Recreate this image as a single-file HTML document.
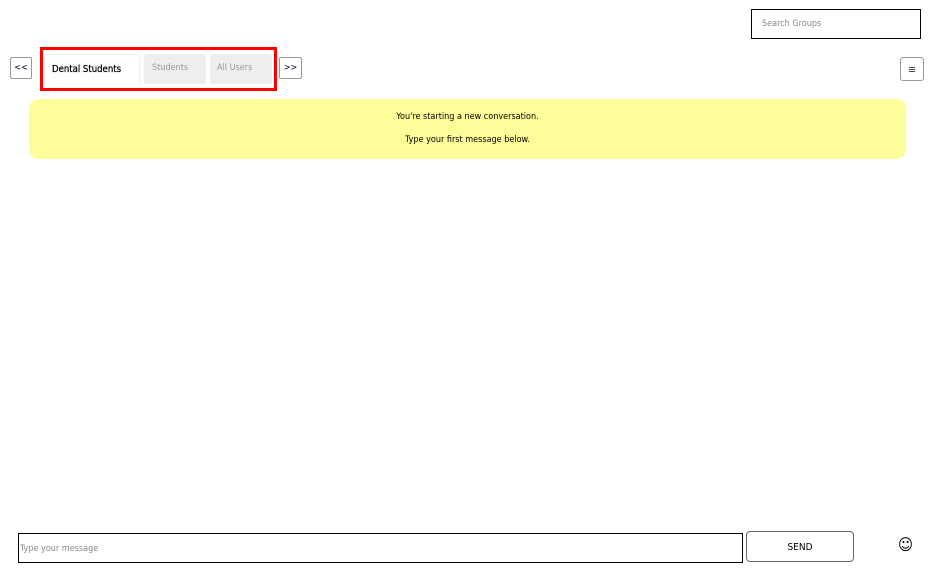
<!DOCTYPE html>
<html><head><style>
body{margin:0;width:936px;height:575px;background:#fff;font-family:"DejaVu Sans Condensed","Liberation Sans",sans-serif;position:relative;overflow:hidden}
.a{position:absolute;box-sizing:border-box}
</style></head><body>
<div class="a" style="left:751px;top:9px;width:170px;height:30px;border:1px solid #000;font-size:9px;color:#888;padding:9px 0 0 10px">Search Groups</div>
<div class="a" style="left:10px;top:57px;width:22px;height:22px;border:1px solid #999;border-radius:2px;font-size:9px;text-align:center;line-height:21px;color:#003">&lt;&lt;</div>
<div class="a" style="left:40px;top:47px;width:237px;height:44px;border:3px solid #f00"></div>
<div class="a" style="left:44px;top:54px;width:96px;height:31px;border:1px solid #eee;border-bottom:none;border-radius:3px 3px 0 0;font-size:9.5px;color:#000;padding:9px 0 0 7px;-webkit-text-stroke:0.25px #000">Dental Students</div>
<div class="a" style="left:144px;top:54px;width:62px;height:30px;background:#eceef0;border-radius:3px 3px 0 0;font-size:9px;color:#999;padding:9px 0 0 8px">Students</div>
<div class="a" style="left:210px;top:54px;width:62px;height:30px;background:#eceef0;border-radius:3px 3px 0 0;font-size:9px;color:#999;padding:9px 0 0 7px">All Users</div>
<div class="a" style="left:279px;top:57px;width:23px;height:22px;border:1px solid #999;border-radius:2px;font-size:9px;text-align:center;line-height:21px;color:#003">&gt;&gt;</div>
<div class="a" style="left:900px;top:57px;width:24px;height:24px;border:1px solid #999;border-radius:3px;font-size:11px;text-align:center;line-height:23px;color:#333">≡</div>
<div class="a" style="left:29px;top:99px;width:877px;height:60px;background:#fdfd99;border-radius:10px;font-size:9px;text-align:center;color:#000;padding-top:12px;line-height:12px">You're starting a new conversation.<br><span style="display:block;margin-top:11px">Type your first message below.</span></div>
<div class="a" style="left:18px;top:533px;width:725px;height:30px;border:1px solid #000;font-size:9px;color:#888;padding:10px 0 0 1px">Type your message</div>
<div class="a" style="left:746px;top:531px;width:108px;height:31px;border:1px solid #666;border-radius:4px;font-size:10px;text-align:center;line-height:31px;color:#000">SEND</div>
<div class="a" style="left:898px;top:535px;font-size:16px;color:#000">☺</div>
</body></html>
